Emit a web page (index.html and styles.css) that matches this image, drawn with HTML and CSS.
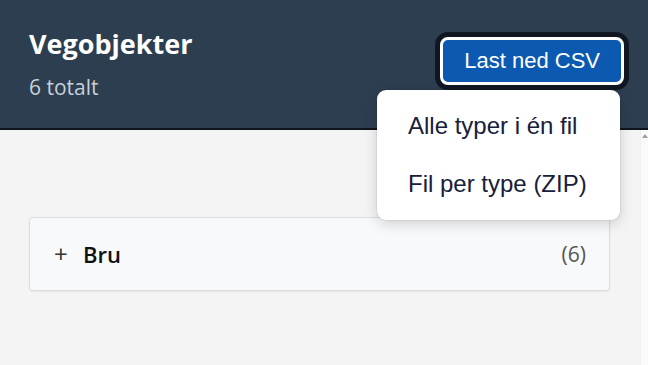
FILE: index.html
```html
<!DOCTYPE html>
<html lang="no">
<head>
<meta charset="utf-8">
<title>Vegobjekter</title>
<link rel="stylesheet" href="styles.css">
</head>
<body>
<div class="app">
  <header class="header">
    <div class="heading">
      <h1 class="title">Vegobjekter</h1>
      <div class="subtitle">6 totalt</div>
    </div>
    <div class="download">
      <button class="btn-download" type="button">Last ned CSV</button>
      <ul class="menu">
        <li class="menu-item">Alle typer i én fil</li>
        <li class="menu-item">Fil per type (ZIP)</li>
      </ul>
    </div>
  </header>
  <div class="body">
    <main class="content">
      <section class="group">
        <span class="group-toggle">+</span>
        <span class="group-name">Bru</span>
        <span class="group-count">(6)</span>
      </section>
    </main>
    <div class="scrollbar"><span class="scroll-arrow"></span></div>
  </div>
</div>
</body>
</html>
```
FILE: styles.css
```css
* { box-sizing: border-box; }
html, body { margin: 0; padding: 0; height: 100%; }
body {
  font-family: "Open Sans", "Noto Sans", sans-serif;
  background: #f4f4f4;
  overflow: hidden;
}
.app {
  display: flex;
  flex-direction: column;
  height: 365px;
}
.header {
  flex: none;
  height: 130px;
  background: #2c3e50;
  border-bottom: 2px solid #0f141b;
  display: flex;
  justify-content: space-between;
  align-items: flex-start;
  padding: 27px 24px 0 29px;
}
.title {
  margin: 0;
  font-size: 27px;
  line-height: 34px;
  font-weight: 700;
  color: #ffffff;
}
.subtitle {
  margin-top: 12px;
  font-size: 21px;
  line-height: 28px;
  color: #c9cfd8;
}
.download {
  position: relative;
  margin-top: 10px;
}
.btn-download {
  display: block;
  font-family: "Liberation Sans", Arial, sans-serif;
  font-size: 22px;
  line-height: 26px;
  color: #ffffff;
  background: #0b59b1;
  border: 3px solid #ffffff;
  border-radius: 8px;
  padding: 8px 21px 8px 21px;
  box-shadow: 0 0 0 5px #111722;
}
.menu {
  position: absolute;
  top: calc(100% + 5px);
  right: 4px;
  width: 243px;
  margin: 0;
  padding: 7px 0;
  list-style: none;
  background: #ffffff;
  border-radius: 9px;
  box-shadow: 0 4px 14px rgba(0, 0, 0, 0.16), 0 0 0 1px rgba(0, 0, 0, 0.05);
  z-index: 10;
}
.menu-item {
  font-family: "Liberation Sans", Arial, sans-serif;
  font-size: 24px;
  line-height: 28px;
  padding: 15px 31px;
  color: #17203a;
  white-space: nowrap;
}
.body {
  flex: 1;
  display: flex;
  min-height: 0;
}
.content {
  flex: 1;
  padding: 87px 30px 0 29px;
  background: #f4f4f4;
}
.scrollbar {
  flex: none;
  width: 8px;
  background: #fafafa;
  border-left: 1px solid #f0f0f0;
  display: flex;
  justify-content: center;
  padding-top: 4px;
}
.scroll-arrow {
  width: 0;
  height: 0;
  border-left: 3px solid transparent;
  border-right: 3px solid transparent;
  border-bottom: 4px solid #a0a0a0;
}
.group {
  height: 74px;
  display: flex;
  align-items: center;
  padding: 0 23px 0 24px;
  background: #f8f9fb;
  border: 1px solid #dcdcdc;
  border-radius: 4px;
  box-shadow: 0 1px 2px rgba(0, 0, 0, 0.06);
}
.group-toggle {
  font-size: 24px;
  color: #333;
  width: 29px;
  line-height: 1;
}
.group-name {
  font-size: 22px;
  font-weight: 600;
  color: #111;
}
.group-count {
  margin-left: auto;
  font-size: 21px;
  color: #555;
}
```
